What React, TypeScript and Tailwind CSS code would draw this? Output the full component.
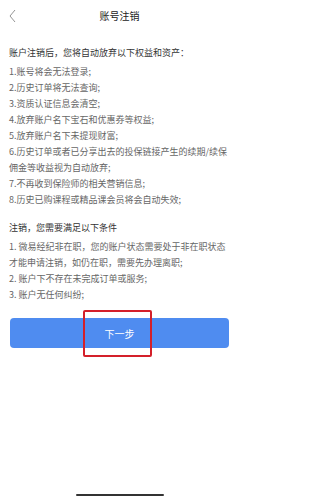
export default function App() {
  const losses = [
    "1.账号将会无法登录;",
    "2.历史订单将无法查询;",
    "3.资质认证信息会清空;",
    "4.放弃账户名下宝石和优惠券等权益;",
    "5.放弃账户名下未提现财富;",
  ];

  return (
    <div
      className="relative flex h-[500px] w-[239px] flex-col bg-white"
      style={{ fontFamily: '"Noto Sans CJK SC", "Noto Sans", sans-serif' }}
    >
      <div className="relative flex h-8 items-center justify-center">
        <svg className="absolute left-[9px] top-[9px]" width="7" height="14" viewBox="0 0 7 14" fill="none">
          <path d="M6 1L1 7l5 6" stroke="#888" strokeWidth="0.9" />
        </svg>
        <span className="text-[10px] leading-none text-[#222]">账号注销</span>
      </div>

      <div className="mt-[13px] px-[9px] text-[9px] leading-4 text-[#666] whitespace-nowrap">
        <p className="text-[#333]">账户注销后，您将自动放弃以下权益和资产：</p>
        <div className="mt-[3px]">
          {losses.map((t) => (
            <p key={t}>{t}</p>
          ))}
          <p>
            6.历史订单或者已分享出去的投保链接产生的续期/续保
            <br />
            佣金等收益视为自动放弃;
          </p>
          <p>7.不再收到保险师的相关营销信息;</p>
          <p>8.历史已购课程或精品课会员将会自动失效;</p>
        </div>

        <p className="mt-3 text-[#333]">注销，您需要满足以下条件</p>
        <div className="mt-[3px]">
          <p>
            1. 微易经纪非在职，您的账户状态需要处于非在职状态
            <br />
            才能申请注销，如仍在职，需要先办理离职;
          </p>
          <p>2. 账户下不存在未完成订单或服务;</p>
          <p>3. 账户无任何纠纷;</p>
        </div>
      </div>

      <div className="relative mt-[15px] px-[10px]">
        <button className="flex h-[30px] w-full items-center justify-center rounded-[4px] bg-[#4f8cf0] text-[10px] text-white">
          下一步
        </button>
        <div className="absolute left-[83px] top-[-8px] h-[47px] w-[69px] rounded-[2px] border-2 border-[#d4202a]" />
      </div>

      <div className="mx-auto mb-[4px] mt-auto h-[2px] w-[88px] rounded-full bg-[#333]" />
    </div>
  );
}
